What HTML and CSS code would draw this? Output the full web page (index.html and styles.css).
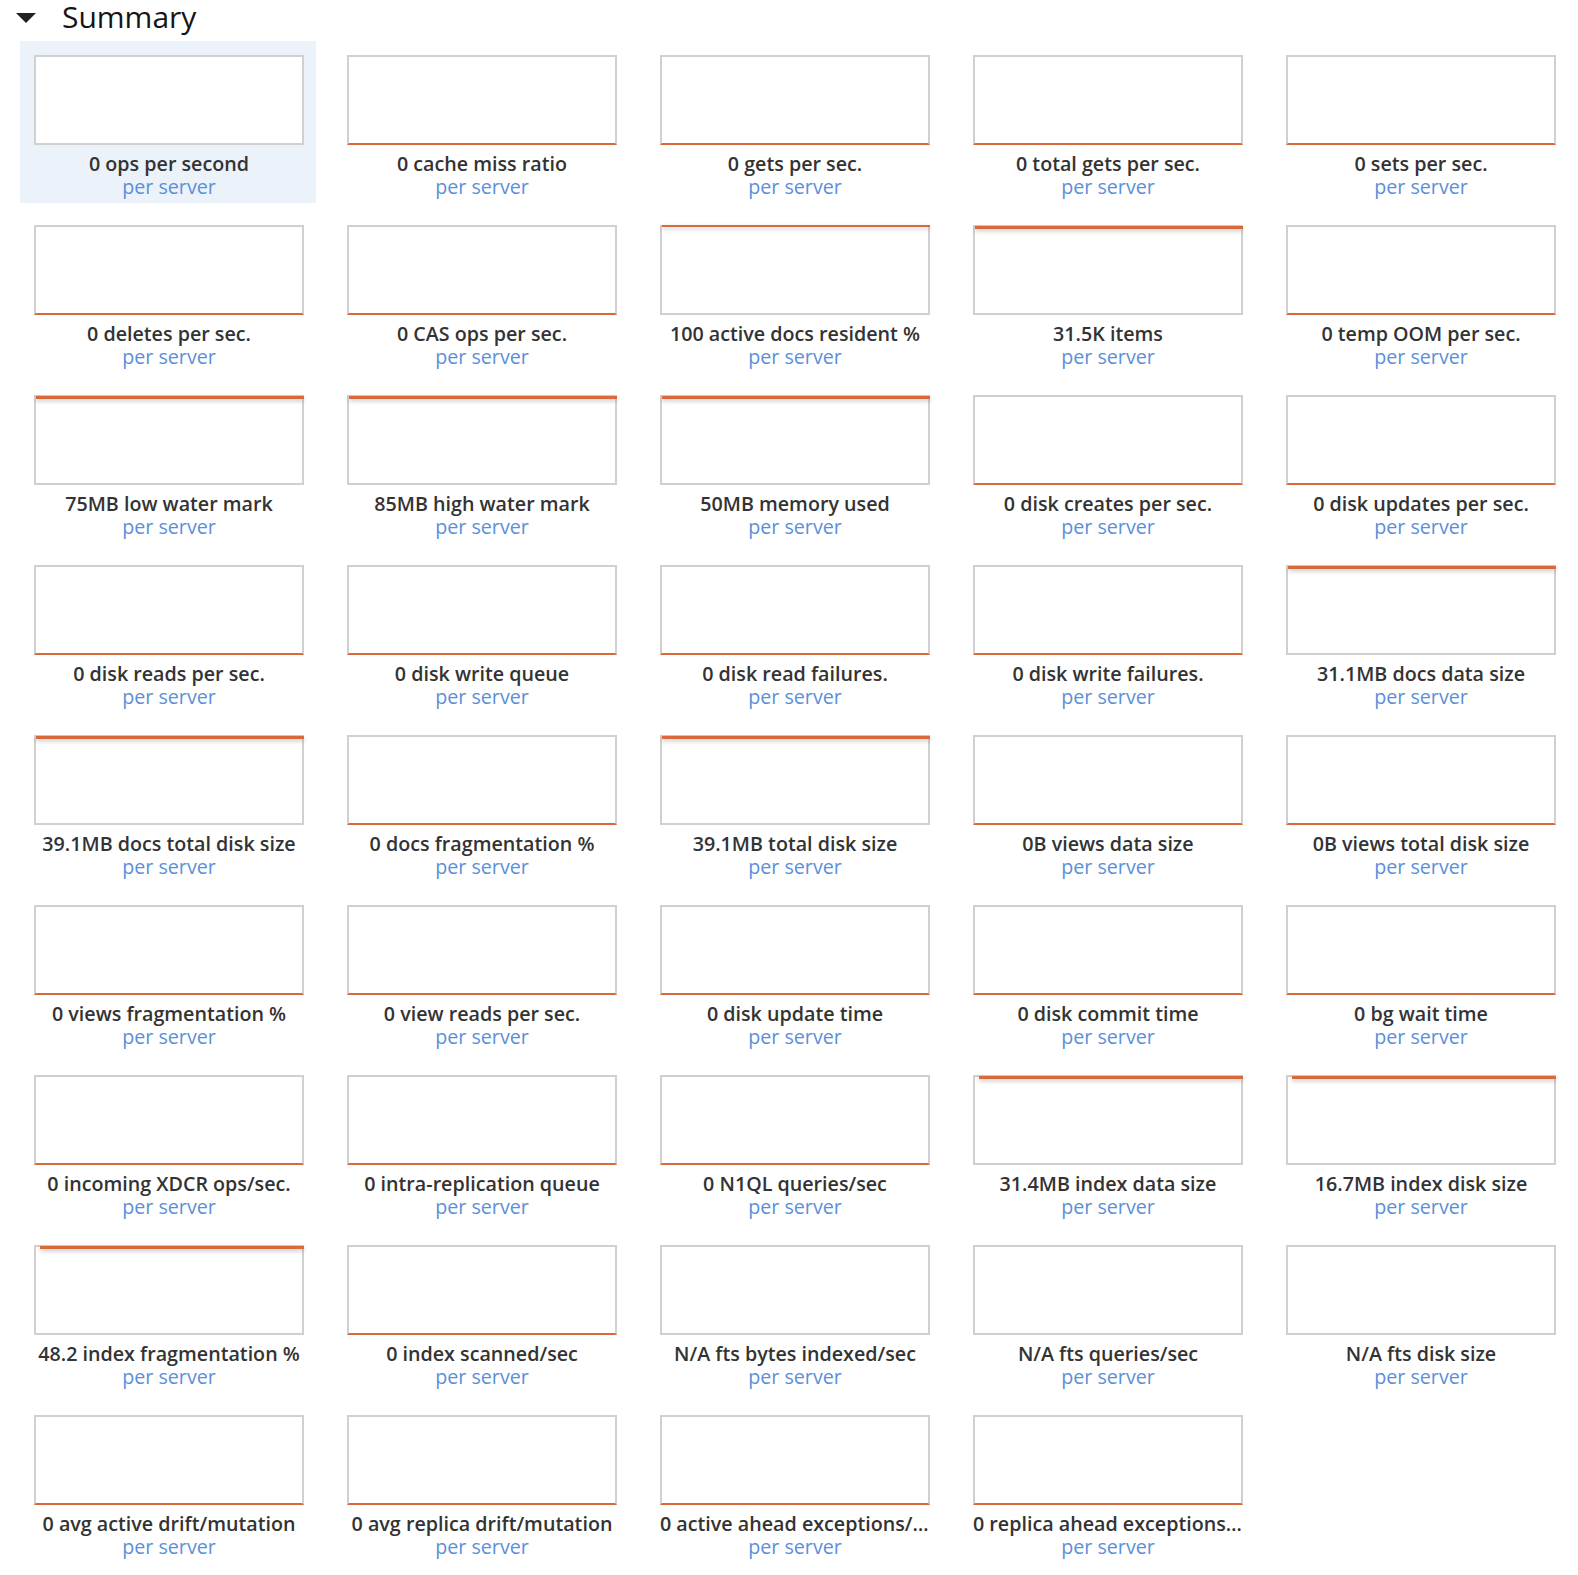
FILE: index.html
```html
<!DOCTYPE html>
<html>
<head>
<meta charset="utf-8">
<link rel="stylesheet" href="styles.css">
</head>
<body>
<section class="section">
  <h2 class="section-title"><span class="caret"></span>Summary</h2>
  <div class="grid">
    <div class="card selected"><div class="chart"></div><div class="label">0 ops per second</div><div class="sub">per server</div></div>
    <div class="card"><div class="chart zero"></div><div class="label">0 cache miss ratio</div><div class="sub">per server</div></div>
    <div class="card"><div class="chart zero"></div><div class="label">0 gets per sec.</div><div class="sub">per server</div></div>
    <div class="card"><div class="chart zero"></div><div class="label">0 total gets per sec.</div><div class="sub">per server</div></div>
    <div class="card"><div class="chart zero"></div><div class="label">0 sets per sec.</div><div class="sub">per server</div></div>

    <div class="card"><div class="chart zero"></div><div class="label">0 deletes per sec.</div><div class="sub">per server</div></div>
    <div class="card"><div class="chart zero"></div><div class="label">0 CAS ops per sec.</div><div class="sub">per server</div></div>
    <div class="card"><div class="chart top thin"></div><div class="label">100 active docs resident %</div><div class="sub">per server</div></div>
    <div class="card"><div class="chart top"></div><div class="label">31.5K items</div><div class="sub">per server</div></div>
    <div class="card"><div class="chart zero"></div><div class="label">0 temp OOM per sec.</div><div class="sub">per server</div></div>

    <div class="card"><div class="chart top"></div><div class="label">75MB low water mark</div><div class="sub">per server</div></div>
    <div class="card"><div class="chart top"></div><div class="label">85MB high water mark</div><div class="sub">per server</div></div>
    <div class="card"><div class="chart top"></div><div class="label">50MB memory used</div><div class="sub">per server</div></div>
    <div class="card"><div class="chart zero"></div><div class="label">0 disk creates per sec.</div><div class="sub">per server</div></div>
    <div class="card"><div class="chart zero"></div><div class="label">0 disk updates per sec.</div><div class="sub">per server</div></div>

    <div class="card"><div class="chart zero"></div><div class="label">0 disk reads per sec.</div><div class="sub">per server</div></div>
    <div class="card"><div class="chart zero"></div><div class="label">0 disk write queue</div><div class="sub">per server</div></div>
    <div class="card"><div class="chart zero"></div><div class="label">0 disk read failures.</div><div class="sub">per server</div></div>
    <div class="card"><div class="chart zero"></div><div class="label">0 disk write failures.</div><div class="sub">per server</div></div>
    <div class="card"><div class="chart top"></div><div class="label">31.1MB docs data size</div><div class="sub">per server</div></div>

    <div class="card"><div class="chart top"></div><div class="label">39.1MB docs total disk size</div><div class="sub">per server</div></div>
    <div class="card"><div class="chart zero"></div><div class="label">0 docs fragmentation %</div><div class="sub">per server</div></div>
    <div class="card"><div class="chart top"></div><div class="label">39.1MB total disk size</div><div class="sub">per server</div></div>
    <div class="card"><div class="chart zero"></div><div class="label">0B views data size</div><div class="sub">per server</div></div>
    <div class="card"><div class="chart zero"></div><div class="label">0B views total disk size</div><div class="sub">per server</div></div>

    <div class="card"><div class="chart zero"></div><div class="label">0 views fragmentation %</div><div class="sub">per server</div></div>
    <div class="card"><div class="chart zero"></div><div class="label">0 view reads per sec.</div><div class="sub">per server</div></div>
    <div class="card"><div class="chart zero"></div><div class="label">0 disk update time</div><div class="sub">per server</div></div>
    <div class="card"><div class="chart zero"></div><div class="label">0 disk commit time</div><div class="sub">per server</div></div>
    <div class="card"><div class="chart zero"></div><div class="label">0 bg wait time</div><div class="sub">per server</div></div>

    <div class="card"><div class="chart zero"></div><div class="label">0 incoming XDCR ops/sec.</div><div class="sub">per server</div></div>
    <div class="card"><div class="chart zero"></div><div class="label">0 intra-replication queue</div><div class="sub">per server</div></div>
    <div class="card"><div class="chart zero"></div><div class="label">0 N1QL queries/sec</div><div class="sub">per server</div></div>
    <div class="card"><div class="chart top inset"></div><div class="label">31.4MB index data size</div><div class="sub">per server</div></div>
    <div class="card"><div class="chart top inset"></div><div class="label">16.7MB index disk size</div><div class="sub">per server</div></div>

    <div class="card"><div class="chart top inset"></div><div class="label">48.2 index fragmentation %</div><div class="sub">per server</div></div>
    <div class="card"><div class="chart zero"></div><div class="label">0 index scanned/sec</div><div class="sub">per server</div></div>
    <div class="card"><div class="chart"></div><div class="label">N/A fts bytes indexed/sec</div><div class="sub">per server</div></div>
    <div class="card"><div class="chart"></div><div class="label">N/A fts queries/sec</div><div class="sub">per server</div></div>
    <div class="card"><div class="chart"></div><div class="label">N/A fts disk size</div><div class="sub">per server</div></div>

    <div class="card"><div class="chart zero"></div><div class="label">0 avg active drift/mutation</div><div class="sub">per server</div></div>
    <div class="card"><div class="chart zero"></div><div class="label">0 avg replica drift/mutation</div><div class="sub">per server</div></div>
    <div class="card"><div class="chart zero"></div><div class="label">0 active ahead exceptions/sec</div><div class="sub">per server</div></div>
    <div class="card"><div class="chart zero"></div><div class="label">0 replica ahead exceptions/sec</div><div class="sub">per server</div></div>
  </div>
</section>
</body>
</html>
```
FILE: styles.css
```css
html, body {
  margin: 0;
  padding: 0;
  background: #ffffff;
}

body {
  font-family: "Open Sans", "Noto Sans", "Liberation Sans", sans-serif;
  color: #333333;
}

.section {
  padding: 0 0 0 20px;
}

.section-title {
  display: flex;
  align-items: center;
  margin: 0 0 0 -20px;
  height: 36px;
  padding-left: 16px;
  font-size: 30px;
  font-weight: 400;
  color: #151515;
  line-height: 36px;
  position: relative;
  top: -1px;
}

.caret {
  width: 0;
  height: 0;
  border-left: 10px solid transparent;
  border-right: 10px solid transparent;
  border-top: 10px solid #222222;
  margin-right: 26px;
  margin-top: 1px;
}

.grid {
  display: grid;
  grid-template-columns: repeat(5, 296px);
  column-gap: 17px;
  row-gap: 8px;
  margin-top: 5px;
}

.card {
  height: 162px;
  box-sizing: border-box;
  padding: 14px 12px 0 14px;
}

.card.selected {
  background: #ebf2fa;
}

.chart {
  position: relative;
  width: 270px;
  height: 90px;
  box-sizing: border-box;
  border: 2px solid #d0d0d0;
  background: #ffffff;
}

.chart.zero {
  border-bottom-color: #d9683a;
}

.chart.top::before {
  content: "";
  position: absolute;
  top: -1px;
  left: 0;
  right: -2px;
  height: 3px;
  background: #d9683a;
  box-shadow: 0 2px 4px rgba(0, 0, 0, 0.25);
}

.chart.top.thin::before {
  top: -2px;
  height: 2px;
}

.chart.top.inset::before {
  left: 4px;
}

.label {
  width: 270px;
  margin-top: 7px;
  font-size: 19.7px;
  font-weight: 600;
  line-height: 24px;
  color: #333333;
  text-align: center;
  white-space: nowrap;
  overflow: hidden;
  text-overflow: ellipsis;
}

.sub {
  width: 270px;
  font-size: 19.7px;
  font-weight: 400;
  line-height: 22px;
  color: #5b8fd9;
  text-align: center;
}
```
